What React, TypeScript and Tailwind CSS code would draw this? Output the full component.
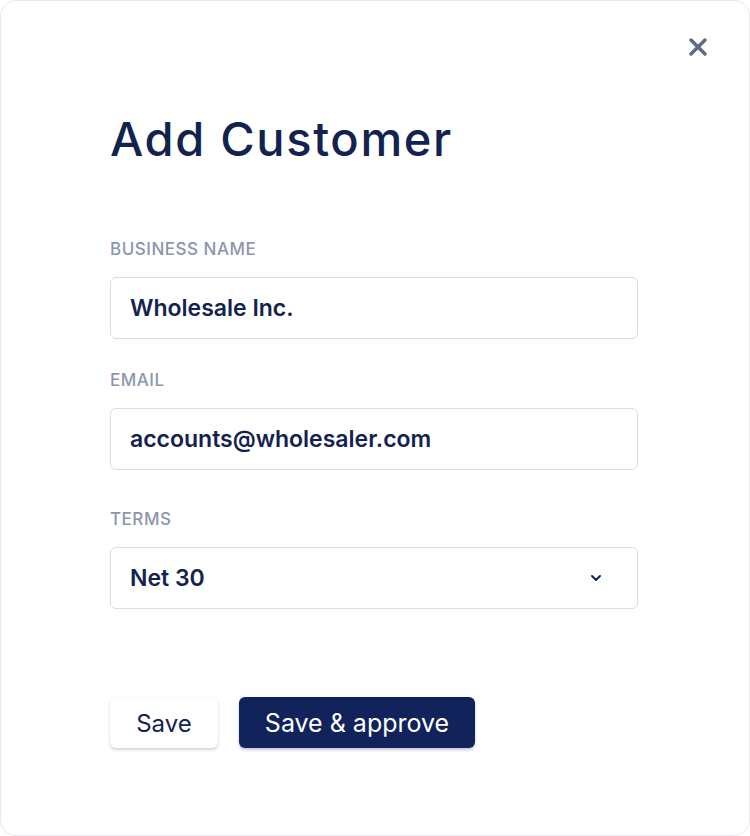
import { ChevronDown, X } from 'lucide-react'

const fields = [
  { label: 'Business Name', value: 'Wholesale Inc.' },
  { label: 'Email', value: 'accounts@wholesaler.com' },
]

function Label({ children }: { children: React.ReactNode }) {
  return (
    <div className="text-[17px] leading-5 font-medium uppercase text-[#8d95ae] tracking-[0.03em]">
      {children}
    </div>
  )
}

export default function App() {
  return (
    <div className="w-[750px] h-[836px] bg-white font-['Inter',sans-serif]">
      <div className="relative w-full h-full rounded-2xl border border-[#e8eaef] bg-white">
        <button className="absolute right-[37px] top-[32px] text-[#5d6987]">
          <X size={28} strokeWidth={3} />
        </button>

        <div className="flex flex-col pl-[109px] pr-[111px] pt-[110px]">
          <h1 className="text-[47px] leading-[56px] font-medium text-[#13234f] tracking-[0.035em]">
            Add Customer
          </h1>

          <div className="flex flex-col gap-[31px] mt-[72px]">
            {fields.map((f) => (
              <div key={f.label} className="flex flex-col gap-[18px]">
                <Label>{f.label}</Label>
                <div className="h-[62px] flex items-center px-[19px] rounded-[6px] border-[1.5px] border-[#d9dde5] text-[23px] font-semibold text-[#13234f]">
                  {f.value}
                </div>
              </div>
            ))}

            <div className="flex flex-col gap-[18px] mt-[8px]">
              <Label>Terms</Label>
              <div className="h-[62px] flex items-center justify-between pl-[19px] pr-[33px] rounded-[6px] border-[1.5px] border-[#d9dde5] text-[23px] font-semibold text-[#13234f]">
                <span>Net 30</span>
                <ChevronDown size={16} strokeWidth={3} />
              </div>
            </div>
          </div>

          <div className="flex gap-[21px] mt-[88px]">
            <button className="h-[51px] w-[108px] pt-[3px] rounded-[6px] bg-white text-[24px] text-[#13234f] shadow-[0_2px_3px_rgba(20,35,80,0.18),0_0_1px_rgba(20,35,80,0.15)]">
              Save
            </button>
            <button className="h-[51px] w-[236px] pt-[3px] rounded-[6px] bg-[#12225a] text-[25px] text-white shadow-[0_2px_3px_rgba(20,35,80,0.25)]">
              Save &amp; approve
            </button>
          </div>
        </div>
      </div>
    </div>
  )
}
